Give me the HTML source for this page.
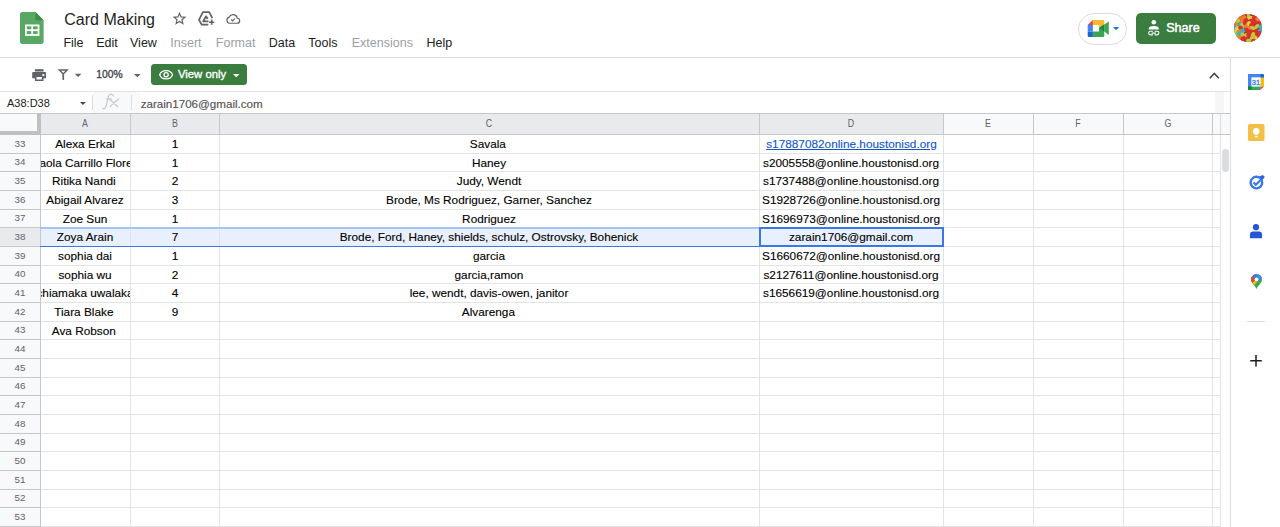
<!DOCTYPE html>
<html><head><meta charset="utf-8"><style>
html,body{margin:0;padding:0;}
body{width:1280px;height:527px;overflow:hidden;position:relative;background:#fff;font-family:"Liberation Sans",sans-serif;}
.t{position:absolute;white-space:nowrap;}
.a{position:absolute;}
.hl{position:absolute;height:1px;}
.vl{position:absolute;width:1px;}
svg{position:absolute;overflow:visible;}
</style></head><body>
<svg style="left:20.2px;top:12.3px" width="24" height="32" viewBox="0 0 24 32">
<path d="M2.5 0H15.5L23.6 8.2V29.5A2.5 2.5 0 0 1 21.1 32H2.5A2.5 2.5 0 0 1 0 29.5V2.5A2.5 2.5 0 0 1 2.5 0Z" fill="#56a862"/>
<path d="M15.5 0V8.2H23.6Z" fill="#3e8a4b"/>
<rect x="5" y="12.5" width="14.4" height="11.4" fill="#fff"/>
<rect x="6.8" y="14.3" width="4.5" height="3" fill="#56a862"/>
<rect x="13.1" y="14.3" width="4.5" height="3" fill="#56a862"/>
<rect x="6.8" y="19.1" width="4.5" height="3" fill="#56a862"/>
<rect x="13.1" y="19.1" width="4.5" height="3" fill="#56a862"/>
</svg>
<div class="t" style="left:64.3px;top:11.86px;font-size:16px;line-height:16px;color:#1f1f1f;font-weight:normal;">Card Making</div>
<svg style="left:173px;top:12px" width="13" height="13" viewBox="0 0 24 24"><path d="M12 2.5l2.8 6.6 7.2.6-5.5 4.7 1.7 7-6.2-3.8-6.2 3.8 1.7-7L2 9.7l7.2-.6z" fill="none" stroke="#5f6368" stroke-width="2.2" stroke-linejoin="miter"/></svg>
<svg style="left:198px;top:11px" width="18" height="16" viewBox="0 0 18 16"><path d="M10.3 13.7H3.8L1 8.9 4.9 1.1H11.2L14.4 7.1" fill="none" stroke="#5f6368" stroke-width="1.7" stroke-linejoin="round"/><path d="M10.6 10.3H5.2L8.1 5.3 9.7 8" fill="none" stroke="#5f6368" stroke-width="1.7" stroke-linejoin="round"/><path d="M13.7 8.6V13.8M11.1 11.2H16.3" stroke="#5f6368" stroke-width="1.6"/></svg>
<svg style="left:226px;top:14px" width="14" height="10" viewBox="0 0 28 20"><path d="M7 18.5h15a5 5 0 0 0 .6-10A8.5 8.5 0 0 0 6.5 6.2 6.3 6.3 0 0 0 7 18.5z" fill="none" stroke="#5f6368" stroke-width="2.4"/><path d="M10.5 11l2.8 2.8 4.5-4.5" fill="none" stroke="#5f6368" stroke-width="2.4"/></svg>
<div class="t" style="left:63.4px;top:37.22px;font-size:12.5px;line-height:12.5px;color:#202124;font-weight:normal;">File</div>
<div class="t" style="left:96.25px;top:37.22px;font-size:12.5px;line-height:12.5px;color:#202124;font-weight:normal;">Edit</div>
<div class="t" style="left:130px;top:37.22px;font-size:12.5px;line-height:12.5px;color:#202124;font-weight:normal;">View</div>
<div class="t" style="left:170.3px;top:37.22px;font-size:12.5px;line-height:12.5px;color:#9aa0a6;font-weight:normal;">Insert</div>
<div class="t" style="left:215.8px;top:37.22px;font-size:12.5px;line-height:12.5px;color:#9aa0a6;font-weight:normal;">Format</div>
<div class="t" style="left:268.75px;top:37.22px;font-size:12.5px;line-height:12.5px;color:#202124;font-weight:normal;">Data</div>
<div class="t" style="left:308.25px;top:37.22px;font-size:12.5px;line-height:12.5px;color:#202124;font-weight:normal;">Tools</div>
<div class="t" style="left:351.75px;top:37.22px;font-size:12.5px;line-height:12.5px;color:#9aa0a6;font-weight:normal;">Extensions</div>
<div class="t" style="left:426.5px;top:37.22px;font-size:12.5px;line-height:12.5px;color:#202124;font-weight:normal;">Help</div>
<div class="a" style="left:1077.5px;top:12.5px;width:47px;height:30.5px;border:1px solid #dadce0;border-radius:16px;box-sizing:content-box"></div>
<svg style="left:1084px;top:16px" width="28" height="24" viewBox="0 0 28 24">
<path d="M3.7 8.9L8.9 3.9V8.9Z" fill="#ea4335"/>
<path d="M8.9 3.9H19A1.3 1.3 0 0 1 20.3 5.2V8.3L15 12.1V8.9H8.9Z" fill="#f5ba2f"/>
<path d="M3.7 8.9H8.9V15.5H3.7Z" fill="#4285f4"/>
<path d="M3.7 15.5H8.9V21H5A1.3 1.3 0 0 1 3.7 19.7Z" fill="#1f63d0"/>
<path d="M8.9 15.5H15V12.1L20.3 8.3V19.7A1.3 1.3 0 0 1 19 21H8.9Z" fill="#3aa655"/>
<path d="M15 12.1L20.3 8.3V15.5Z" fill="#268040"/>
<path d="M20.3 8.6L24.8 5.4V19.1L20.3 15.5Z" fill="#3aa655"/>
</svg>
<svg style="left:1113px;top:26.75px" width="6.2" height="3.3" viewBox="0 0 10 5"><path d="M0 0h10L5 5z" fill="#1a73e8"/></svg>
<div class="a" style="left:1136.2px;top:12.5px;width:79.7px;height:31.6px;background:#3a7d3f;border-radius:5px"></div>
<svg style="left:1148px;top:20.3px" width="12" height="16" viewBox="0 0 12 16">
<circle cx="5.8" cy="2.3" r="2.3" fill="#fff"/>
<path d="M0.8 9.6V8.4C0.8 6.7 3.5 5.95 5.8 5.95S10.8 6.7 10.8 8.4V9.6Z" fill="#fff"/>
<path d="M4.9 11.3H2.5A1.8 1.8 0 0 0 2.5 14.9H4.9M6.7 11.3H9.1A1.8 1.8 0 0 1 9.1 14.9H6.7M3.6 13.1H8" fill="none" stroke="#fff" stroke-width="1.1"/>
</svg>
<div class="t" style="left:1166.2px;top:21.53px;font-size:12.6px;line-height:12.6px;color:#fff;font-weight:normal;-webkit-text-stroke:0.45px #fff;">Share</div>
<svg style="left:1234.1px;top:14.1px" width="28" height="28" viewBox="0 0 28 28">
<defs><clipPath id="av"><circle cx="14" cy="14" r="14"/></clipPath></defs>
<g clip-path="url(#av)"><rect width="28" height="28" fill="#a8322a"/>
<ellipse cx="14.3" cy="2.4" rx="2.9" ry="2.1" transform="rotate(60 14.3 2.4)" fill="#bdca3d"/>
<ellipse cx="16.7" cy="4.4" rx="2.9" ry="2.1" transform="rotate(151 16.7 4.4)" fill="#e9cf45"/>
<ellipse cx="20.5" cy="3.4" rx="2.9" ry="2.1" transform="rotate(139 20.5 3.4)" fill="#d9302b"/>
<ellipse cx="23.9" cy="5.8" rx="2.9" ry="2.1" transform="rotate(33 23.9 5.8)" fill="#ef7a2c"/>
<ellipse cx="11" cy="1.5" rx="2.9" ry="2.1" transform="rotate(94 11 1.5)" fill="#d9302b"/>
<ellipse cx="5.5" cy="4.1" rx="2.9" ry="2.1" transform="rotate(154 5.5 4.1)" fill="#ef7a2c"/>
<ellipse cx="9.6" cy="3.8" rx="2.9" ry="2.1" transform="rotate(121 9.6 3.8)" fill="#ef7a2c"/>
<ellipse cx="3.4" cy="7.2" rx="2.9" ry="2.1" transform="rotate(160 3.4 7.2)" fill="#bdca3d"/>
<ellipse cx="8.5" cy="7.2" rx="2.9" ry="2.1" transform="rotate(148 8.5 7.2)" fill="#ef7a2c"/>
<ellipse cx="12.3" cy="6.8" rx="2.9" ry="2.1" transform="rotate(16 12.3 6.8)" fill="#d9302b"/>
<ellipse cx="16.4" cy="7.2" rx="2.9" ry="2.1" transform="rotate(155 16.4 7.2)" fill="#d9302b"/>
<ellipse cx="20.5" cy="8.2" rx="2.9" ry="2.1" transform="rotate(3 20.5 8.2)" fill="#d9302b"/>
<ellipse cx="24.6" cy="9.6" rx="2.9" ry="2.1" transform="rotate(120 24.6 9.6)" fill="#d9302b"/>
<ellipse cx="2.4" cy="10.9" rx="2.9" ry="2.1" transform="rotate(66 2.4 10.9)" fill="#ef7a2c"/>
<ellipse cx="6.1" cy="10.6" rx="2.9" ry="2.1" transform="rotate(141 6.1 10.6)" fill="#3db0c6"/>
<ellipse cx="8.5" cy="11.6" rx="2.9" ry="2.1" transform="rotate(59 8.5 11.6)" fill="#bdca3d"/>
<ellipse cx="11.3" cy="9.6" rx="2.9" ry="2.1" transform="rotate(49 11.3 9.6)" fill="#d9302b"/>
<ellipse cx="14.7" cy="9.9" rx="2.9" ry="2.1" transform="rotate(120 14.7 9.9)" fill="#e9cf45"/>
<ellipse cx="17.8" cy="10.6" rx="2.9" ry="2.1" transform="rotate(138 17.8 10.6)" fill="#d9302b"/>
<ellipse cx="22.9" cy="12.6" rx="2.9" ry="2.1" transform="rotate(140 22.9 12.6)" fill="#bdca3d"/>
<ellipse cx="26.6" cy="13.0" rx="2.9" ry="2.1" transform="rotate(121 26.6 13.0)" fill="#3db0c6"/>
<ellipse cx="0.7" cy="14.3" rx="2.9" ry="2.1" transform="rotate(101 0.7 14.3)" fill="#3db0c6"/>
<ellipse cx="3.8" cy="14.3" rx="2.9" ry="2.1" transform="rotate(163 3.8 14.3)" fill="#e9cf45"/>
<ellipse cx="6.8" cy="14" rx="2.9" ry="2.1" transform="rotate(38 6.8 14)" fill="#d9302b"/>
<ellipse cx="12.3" cy="13" rx="2.9" ry="2.1" transform="rotate(59 12.3 13)" fill="#ef7a2c"/>
<ellipse cx="15.4" cy="14.3" rx="2.9" ry="2.1" transform="rotate(162 15.4 14.3)" fill="#ef7a2c"/>
<ellipse cx="18.8" cy="14.3" rx="2.9" ry="2.1" transform="rotate(38 18.8 14.3)" fill="#bdca3d"/>
<ellipse cx="23.9" cy="16.4" rx="2.9" ry="2.1" transform="rotate(133 23.9 16.4)" fill="#d9302b"/>
<ellipse cx="26" cy="17.1" rx="2.9" ry="2.1" transform="rotate(99 26 17.1)" fill="#3db0c6"/>
<ellipse cx="1.4" cy="17.8" rx="2.9" ry="2.1" transform="rotate(3 1.4 17.8)" fill="#e9cf45"/>
<ellipse cx="5.5" cy="17.8" rx="2.9" ry="2.1" transform="rotate(171 5.5 17.8)" fill="#ef7a2c"/>
<ellipse cx="9.2" cy="16.4" rx="2.9" ry="2.1" transform="rotate(16 9.2 16.4)" fill="#3db0c6"/>
<ellipse cx="13" cy="16.4" rx="2.9" ry="2.1" transform="rotate(40 13 16.4)" fill="#d9302b"/>
<ellipse cx="16.4" cy="17.8" rx="2.9" ry="2.1" transform="rotate(151 16.4 17.8)" fill="#d9302b"/>
<ellipse cx="21.2" cy="17.8" rx="2.9" ry="2.1" transform="rotate(10 21.2 17.8)" fill="#d9302b"/>
<ellipse cx="3.4" cy="20.1" rx="2.9" ry="2.1" transform="rotate(77 3.4 20.1)" fill="#93c144"/>
<ellipse cx="6.1" cy="19.8" rx="2.9" ry="2.1" transform="rotate(7 6.1 19.8)" fill="#3db0c6"/>
<ellipse cx="8.9" cy="21.2" rx="2.9" ry="2.1" transform="rotate(68 8.9 21.2)" fill="#bdca3d"/>
<ellipse cx="12" cy="21.9" rx="2.9" ry="2.1" transform="rotate(121 12 21.9)" fill="#bdca3d"/>
<ellipse cx="15" cy="20.5" rx="2.9" ry="2.1" transform="rotate(152 15 20.5)" fill="#d9302b"/>
<ellipse cx="19.1" cy="20.8" rx="2.9" ry="2.1" transform="rotate(99 19.1 20.8)" fill="#bdca3d"/>
<ellipse cx="25.3" cy="19.8" rx="2.9" ry="2.1" transform="rotate(109 25.3 19.8)" fill="#d9302b"/>
<ellipse cx="5.5" cy="23.9" rx="2.9" ry="2.1" transform="rotate(101 5.5 23.9)" fill="#ef7a2c"/>
<ellipse cx="9.2" cy="24.6" rx="2.9" ry="2.1" transform="rotate(147 9.2 24.6)" fill="#d9302b"/>
<ellipse cx="12.6" cy="25.3" rx="2.9" ry="2.1" transform="rotate(113 12.6 25.3)" fill="#d9302b"/>
<ellipse cx="18.4" cy="24.6" rx="2.9" ry="2.1" transform="rotate(34 18.4 24.6)" fill="#bdca3d"/>
<ellipse cx="22.5" cy="23.9" rx="2.9" ry="2.1" transform="rotate(93 22.5 23.9)" fill="#e9cf45"/>
<ellipse cx="15" cy="27" rx="2.9" ry="2.1" transform="rotate(24 15 27)" fill="#bdca3d"/>
<ellipse cx="20" cy="27" rx="2.9" ry="2.1" transform="rotate(9 20 27)" fill="#d9302b"/>
<ellipse cx="25" cy="22" rx="2.9" ry="2.1" transform="rotate(34 25 22)" fill="#d9302b"/>
</g></svg>
<div class="hl" style="left:0;top:57px;width:1280px;background:#dadce0"></div>
<svg style="left:26px;top:62px" width="60" height="26" viewBox="0 0 60 26">
<rect x="8.9" y="7.2" width="8.6" height="1.9" fill="#5f6368"/>
<rect x="8.9" y="9.1" width="8.6" height="1.1" fill="#a7abb0"/>
<path d="M7 10.1H19.2A0.8 0.8 0 0 1 20 10.9V16.3H17.5V19H8.9V16.3H6.2V10.9A0.8 0.8 0 0 1 7 10.1Z" fill="#5f6368"/>
<rect x="10.5" y="15" width="5.3" height="2.5" fill="#fff"/>
<rect x="16.4" y="12.1" width="1.9" height="1.9" fill="#fff"/>
<path d="M33.4 7.9H41.1L37.25 11.9Z" fill="none" stroke="#5f6368" stroke-width="1.5" stroke-linejoin="miter"/>
<rect x="36.4" y="12.2" width="1.7" height="5.7" fill="#5f6368"/>
<path d="M48.8 11.8H55.5L52.15 15.1Z" fill="#5f6368"/>
</svg>
<div class="t" style="left:96.3px;top:69.88px;font-size:10.3px;line-height:10.3px;color:#3c4043;font-weight:normal;-webkit-text-stroke:0.3px #3c4043;">100%</div>
<svg style="left:133.5px;top:73.9px" width="6.7" height="3.4" viewBox="0 0 10 5"><path d="M0 0h10L5 5z" fill="#5f6368"/></svg>
<div class="a" style="left:151px;top:64px;width:96px;height:21.2px;background:#3a7d3f;border-radius:3.5px"></div>
<svg style="left:159.2px;top:70px" width="14.2" height="9.6" viewBox="0 0 22 15"><path d="M11 1C6 1 2.2 4 1 7.5 2.2 11 6 14 11 14s8.8-3 10-6.5C19.8 4 16 1 11 1z" fill="none" stroke="#fff" stroke-width="2"/><circle cx="11" cy="7.5" r="3.3" fill="none" stroke="#fff" stroke-width="2"/></svg>
<div class="t" style="left:178px;top:69.23px;font-size:11.3px;line-height:11.3px;color:#fff;font-weight:normal;-webkit-text-stroke:0.35px #fff;">View only</div>
<svg style="left:233px;top:74px" width="6.5" height="3.3" viewBox="0 0 10 5"><path d="M0 0h10L5 5z" fill="#fff"/></svg>
<svg style="left:1209px;top:71.5px" width="10.6" height="7" viewBox="0 0 10.6 7"><path d="M0.8 6.3L5.3 1.5 9.8 6.3" fill="none" stroke="#444746" stroke-width="1.6"/></svg>
<div class="hl" style="left:0;top:91px;width:1230px;background:#e1e3e1"></div>
<div class="t" style="left:7px;top:97.69px;font-size:11px;line-height:11px;color:#202124;font-weight:normal;">A38:D38</div>
<svg style="left:80px;top:102px" width="5.8" height="3" viewBox="0 0 10 5"><path d="M0 0h10L5 5z" fill="#444746"/></svg>
<div class="vl" style="left:92px;top:94.5px;height:15.5px;background:#dadce0"></div>
<div class="a" style="left:92.5px;top:92px;width:47.5px;height:21px;background:#f8f9fa"></div>
<svg style="left:98px;top:92px" width="26" height="20" viewBox="0 0 26 20"><path d="M4.8 16.4Q7.3 17.8 8.4 13L10.3 4.8Q11.2 1.9 13.3 2.2Q14.9 2.5 15.4 3.9M8.7 7H13.3M12.4 8.3L19.6 14.6M12 14.6Q15.5 11.2 20.6 7.1" fill="none" stroke="#c9cacb" stroke-width="1.3" stroke-linecap="round"/></svg>
<div class="vl" style="left:131px;top:94.5px;height:15.5px;background:#dadce0"></div>
<div class="t" style="left:140.7px;top:97.98px;font-size:11.6px;line-height:11.6px;color:#525252;font-weight:normal;-webkit-text-stroke:0.15px #525252;">zarain1706@gmail.com</div>
<div class="a" style="left:1215px;top:92px;width:8.7px;height:21px;background:#f6f6f6"></div>
<div class="a" style="left:0;top:113px;width:1230px;height:21px;background:#f8f9fa"></div>
<div class="a" style="left:40px;top:113px;width:903px;height:21px;background:#e8eaed"></div>
<div class="a" style="left:0;top:134px;width:40px;height:393px;background:#f8f9fa"></div>
<div class="a" style="left:0;top:228.40px;width:40px;height:17.66px;background:#e8eaed"></div>
<div class="a" style="left:41px;top:227.40px;width:902px;height:18.66px;background:#e8f0fd"></div>
<div class="hl" style="left:40px;top:152.76px;width:1180px;background:#e2e3e3"></div>
<div class="hl" style="left:0;top:152.76px;width:40px;background:#c7c7c7"></div>
<div class="hl" style="left:40px;top:171.42px;width:1180px;background:#e2e3e3"></div>
<div class="hl" style="left:0;top:171.42px;width:40px;background:#c7c7c7"></div>
<div class="hl" style="left:40px;top:190.08px;width:1180px;background:#e2e3e3"></div>
<div class="hl" style="left:0;top:190.08px;width:40px;background:#c7c7c7"></div>
<div class="hl" style="left:40px;top:208.74px;width:1180px;background:#e2e3e3"></div>
<div class="hl" style="left:0;top:208.74px;width:40px;background:#c7c7c7"></div>
<div class="hl" style="left:40px;top:227.40px;width:1180px;background:#e2e3e3"></div>
<div class="hl" style="left:0;top:227.40px;width:40px;background:#c7c7c7"></div>
<div class="hl" style="left:40px;top:246.06px;width:1180px;background:#e2e3e3"></div>
<div class="hl" style="left:0;top:246.06px;width:40px;background:#c7c7c7"></div>
<div class="hl" style="left:40px;top:264.72px;width:1180px;background:#e2e3e3"></div>
<div class="hl" style="left:0;top:264.72px;width:40px;background:#c7c7c7"></div>
<div class="hl" style="left:40px;top:283.38px;width:1180px;background:#e2e3e3"></div>
<div class="hl" style="left:0;top:283.38px;width:40px;background:#c7c7c7"></div>
<div class="hl" style="left:40px;top:302.04px;width:1180px;background:#e2e3e3"></div>
<div class="hl" style="left:0;top:302.04px;width:40px;background:#c7c7c7"></div>
<div class="hl" style="left:40px;top:320.70px;width:1180px;background:#e2e3e3"></div>
<div class="hl" style="left:0;top:320.70px;width:40px;background:#c7c7c7"></div>
<div class="hl" style="left:40px;top:339.36px;width:1180px;background:#e2e3e3"></div>
<div class="hl" style="left:0;top:339.36px;width:40px;background:#c7c7c7"></div>
<div class="hl" style="left:40px;top:358.02px;width:1180px;background:#e2e3e3"></div>
<div class="hl" style="left:0;top:358.02px;width:40px;background:#c7c7c7"></div>
<div class="hl" style="left:40px;top:376.68px;width:1180px;background:#e2e3e3"></div>
<div class="hl" style="left:0;top:376.68px;width:40px;background:#c7c7c7"></div>
<div class="hl" style="left:40px;top:395.34px;width:1180px;background:#e2e3e3"></div>
<div class="hl" style="left:0;top:395.34px;width:40px;background:#c7c7c7"></div>
<div class="hl" style="left:40px;top:414.00px;width:1180px;background:#e2e3e3"></div>
<div class="hl" style="left:0;top:414.00px;width:40px;background:#c7c7c7"></div>
<div class="hl" style="left:40px;top:432.66px;width:1180px;background:#e2e3e3"></div>
<div class="hl" style="left:0;top:432.66px;width:40px;background:#c7c7c7"></div>
<div class="hl" style="left:40px;top:451.32px;width:1180px;background:#e2e3e3"></div>
<div class="hl" style="left:0;top:451.32px;width:40px;background:#c7c7c7"></div>
<div class="hl" style="left:40px;top:469.98px;width:1180px;background:#e2e3e3"></div>
<div class="hl" style="left:0;top:469.98px;width:40px;background:#c7c7c7"></div>
<div class="hl" style="left:40px;top:488.64px;width:1180px;background:#e2e3e3"></div>
<div class="hl" style="left:0;top:488.64px;width:40px;background:#c7c7c7"></div>
<div class="hl" style="left:40px;top:507.30px;width:1180px;background:#e2e3e3"></div>
<div class="hl" style="left:0;top:507.30px;width:40px;background:#c7c7c7"></div>
<div class="hl" style="left:40px;top:525.96px;width:1180px;background:#e2e3e3"></div>
<div class="hl" style="left:0;top:525.96px;width:40px;background:#c7c7c7"></div>
<div class="vl" style="left:130px;top:134px;height:393px;background:#e2e3e3"></div>
<div class="vl" style="left:130px;top:113px;height:21px;background:#c7c7c7"></div>
<div class="vl" style="left:219px;top:134px;height:393px;background:#e2e3e3"></div>
<div class="vl" style="left:219px;top:113px;height:21px;background:#c7c7c7"></div>
<div class="vl" style="left:759px;top:134px;height:393px;background:#e2e3e3"></div>
<div class="vl" style="left:759px;top:113px;height:21px;background:#c7c7c7"></div>
<div class="vl" style="left:943px;top:134px;height:393px;background:#e2e3e3"></div>
<div class="vl" style="left:943px;top:113px;height:21px;background:#c7c7c7"></div>
<div class="vl" style="left:1033px;top:134px;height:393px;background:#e2e3e3"></div>
<div class="vl" style="left:1033px;top:113px;height:21px;background:#c7c7c7"></div>
<div class="vl" style="left:1123px;top:134px;height:393px;background:#e2e3e3"></div>
<div class="vl" style="left:1123px;top:113px;height:21px;background:#c7c7c7"></div>
<div class="vl" style="left:1212px;top:134px;height:393px;background:#e2e3e3"></div>
<div class="vl" style="left:1212px;top:113px;height:21px;background:#c7c7c7"></div>
<div class="vl" style="left:1220px;top:134px;height:393px;background:#e2e3e3"></div>
<div class="vl" style="left:1220px;top:113px;height:21px;background:#dcdcdc"></div>
<div class="hl" style="left:0;top:113px;width:1230px;background:#c7c7c7"></div>
<div class="hl" style="left:0;top:134px;width:1230px;background:#c7c7c7"></div>
<div class="vl" style="left:40px;top:134px;height:393px;background:#c7c7c7"></div>
<div class="a" style="left:37px;top:113px;width:4px;height:22px;background:#c0c0c0"></div>
<div class="a" style="left:0;top:131px;width:41px;height:4px;background:#c0c0c0"></div>
<div class="t" style="left:55.00px;width:60px;text-align:center;top:118.01px;font-size:10.5px;line-height:10.5px;color:#5f6368;transform:scaleX(0.84);">A</div>
<div class="t" style="left:144.50px;width:60px;text-align:center;top:118.01px;font-size:10.5px;line-height:10.5px;color:#5f6368;transform:scaleX(0.84);">B</div>
<div class="t" style="left:459.00px;width:60px;text-align:center;top:118.01px;font-size:10.5px;line-height:10.5px;color:#5f6368;transform:scaleX(0.84);">C</div>
<div class="t" style="left:821.00px;width:60px;text-align:center;top:118.01px;font-size:10.5px;line-height:10.5px;color:#5f6368;transform:scaleX(0.84);">D</div>
<div class="t" style="left:958.00px;width:60px;text-align:center;top:118.01px;font-size:10.5px;line-height:10.5px;color:#5f6368;transform:scaleX(0.84);">E</div>
<div class="t" style="left:1048.00px;width:60px;text-align:center;top:118.01px;font-size:10.5px;line-height:10.5px;color:#5f6368;transform:scaleX(0.84);">F</div>
<div class="t" style="left:1137.50px;width:60px;text-align:center;top:118.01px;font-size:10.5px;line-height:10.5px;color:#5f6368;transform:scaleX(0.84);">G</div>
<div class="t" style="left:0.00px;width:40px;text-align:center;top:138.66px;font-size:9.8px;line-height:9.8px;color:#5f6368;">33</div>
<div class="t" style="left:0.00px;width:40px;text-align:center;top:157.32px;font-size:9.8px;line-height:9.8px;color:#5f6368;">34</div>
<div class="t" style="left:0.00px;width:40px;text-align:center;top:175.98px;font-size:9.8px;line-height:9.8px;color:#5f6368;">35</div>
<div class="t" style="left:0.00px;width:40px;text-align:center;top:194.64px;font-size:9.8px;line-height:9.8px;color:#5f6368;">36</div>
<div class="t" style="left:0.00px;width:40px;text-align:center;top:213.30px;font-size:9.8px;line-height:9.8px;color:#5f6368;">37</div>
<div class="t" style="left:0.00px;width:40px;text-align:center;top:231.96px;font-size:9.8px;line-height:9.8px;color:#5f6368;">38</div>
<div class="t" style="left:0.00px;width:40px;text-align:center;top:250.62px;font-size:9.8px;line-height:9.8px;color:#5f6368;">39</div>
<div class="t" style="left:0.00px;width:40px;text-align:center;top:269.28px;font-size:9.8px;line-height:9.8px;color:#5f6368;">40</div>
<div class="t" style="left:0.00px;width:40px;text-align:center;top:287.94px;font-size:9.8px;line-height:9.8px;color:#5f6368;">41</div>
<div class="t" style="left:0.00px;width:40px;text-align:center;top:306.60px;font-size:9.8px;line-height:9.8px;color:#5f6368;">42</div>
<div class="t" style="left:0.00px;width:40px;text-align:center;top:325.26px;font-size:9.8px;line-height:9.8px;color:#5f6368;">43</div>
<div class="t" style="left:0.00px;width:40px;text-align:center;top:343.92px;font-size:9.8px;line-height:9.8px;color:#5f6368;">44</div>
<div class="t" style="left:0.00px;width:40px;text-align:center;top:362.58px;font-size:9.8px;line-height:9.8px;color:#5f6368;">45</div>
<div class="t" style="left:0.00px;width:40px;text-align:center;top:381.24px;font-size:9.8px;line-height:9.8px;color:#5f6368;">46</div>
<div class="t" style="left:0.00px;width:40px;text-align:center;top:399.90px;font-size:9.8px;line-height:9.8px;color:#5f6368;">47</div>
<div class="t" style="left:0.00px;width:40px;text-align:center;top:418.56px;font-size:9.8px;line-height:9.8px;color:#5f6368;">48</div>
<div class="t" style="left:0.00px;width:40px;text-align:center;top:437.22px;font-size:9.8px;line-height:9.8px;color:#5f6368;">49</div>
<div class="t" style="left:0.00px;width:40px;text-align:center;top:455.88px;font-size:9.8px;line-height:9.8px;color:#5f6368;">50</div>
<div class="t" style="left:0.00px;width:40px;text-align:center;top:474.54px;font-size:9.8px;line-height:9.8px;color:#5f6368;">51</div>
<div class="t" style="left:0.00px;width:40px;text-align:center;top:493.20px;font-size:9.8px;line-height:9.8px;color:#5f6368;">52</div>
<div class="t" style="left:0.00px;width:40px;text-align:center;top:511.86px;font-size:9.8px;line-height:9.8px;color:#5f6368;">53</div>
<div class="a" style="left:40px;top:226.90px;width:903px;height:2px;background:#a6c3f4"></div>
<div class="hl" style="left:40px;top:246.06px;width:903px;background:#3b78e7"></div>
<div class="a" style="left:759px;top:227.3px;width:181px;height:15.5px;border:2px solid #3b78e7"></div>
<div class="a" style="left:41.00px;top:135.10px;width:89.00px;height:17.66px;overflow:hidden"><div class="t" style="left:-200px;right:-200px;text-align:center;top:3.87px;font-size:11.8px;line-height:11.8px;color:#000;-webkit-text-stroke:0.12px #000;padding-right:1px;">Alexa Erkal</div></div>
<div class="a" style="left:131.00px;top:135.10px;width:88.00px;height:17.66px;overflow:hidden"><div class="t" style="left:-200px;right:-200px;text-align:center;top:3.87px;font-size:11.8px;line-height:11.8px;color:#000;-webkit-text-stroke:0.12px #000;">1</div></div>
<div class="a" style="left:220.00px;top:135.10px;width:539.00px;height:17.66px;overflow:hidden"><div class="t" style="left:-200px;right:-200px;text-align:center;top:3.87px;font-size:11.8px;line-height:11.8px;color:#000;-webkit-text-stroke:0.12px #000;padding-right:3.3px;">Savala</div></div>
<div class="a" style="left:760.00px;top:135.10px;width:183.00px;height:17.66px;overflow:hidden"><div class="t" style="left:-200px;right:-200px;text-align:center;top:3.87px;font-size:11.8px;line-height:11.8px;color:#1155cc;text-decoration:underline;-webkit-text-stroke:0.12px #1155cc;">s17887082online.houstonisd.org</div></div>
<div class="a" style="left:41.00px;top:153.76px;width:89.00px;height:17.66px;overflow:hidden"><div class="t" style="left:-200px;right:-200px;text-align:center;top:3.87px;font-size:11.8px;line-height:11.8px;color:#000;-webkit-text-stroke:0.12px #000;padding-right:1px;">Paola Carrillo Flores</div></div>
<div class="a" style="left:131.00px;top:153.76px;width:88.00px;height:17.66px;overflow:hidden"><div class="t" style="left:-200px;right:-200px;text-align:center;top:3.87px;font-size:11.8px;line-height:11.8px;color:#000;-webkit-text-stroke:0.12px #000;">1</div></div>
<div class="a" style="left:220.00px;top:153.76px;width:539.00px;height:17.66px;overflow:hidden"><div class="t" style="left:-200px;right:-200px;text-align:center;top:3.87px;font-size:11.8px;line-height:11.8px;color:#000;-webkit-text-stroke:0.12px #000;padding-right:1px;">Haney</div></div>
<div class="a" style="left:760.00px;top:153.76px;width:183.00px;height:17.66px;overflow:hidden"><div class="t" style="left:-200px;right:-200px;text-align:center;top:3.87px;font-size:11.8px;line-height:11.8px;color:#000;-webkit-text-stroke:0.12px #000;padding-right:1px;">s2005558@online.houstonisd.org</div></div>
<div class="a" style="left:41.00px;top:172.42px;width:89.00px;height:17.66px;overflow:hidden"><div class="t" style="left:-200px;right:-200px;text-align:center;top:3.87px;font-size:11.8px;line-height:11.8px;color:#000;-webkit-text-stroke:0.12px #000;padding-right:3.3px;">Ritika Nandi</div></div>
<div class="a" style="left:131.00px;top:172.42px;width:88.00px;height:17.66px;overflow:hidden"><div class="t" style="left:-200px;right:-200px;text-align:center;top:3.87px;font-size:11.8px;line-height:11.8px;color:#000;-webkit-text-stroke:0.12px #000;">2</div></div>
<div class="a" style="left:220.00px;top:172.42px;width:539.00px;height:17.66px;overflow:hidden"><div class="t" style="left:-200px;right:-200px;text-align:center;top:3.87px;font-size:11.8px;line-height:11.8px;color:#000;-webkit-text-stroke:0.12px #000;padding-right:1px;">Judy, Wendt</div></div>
<div class="a" style="left:760.00px;top:172.42px;width:183.00px;height:17.66px;overflow:hidden"><div class="t" style="left:-200px;right:-200px;text-align:center;top:3.87px;font-size:11.8px;line-height:11.8px;color:#000;-webkit-text-stroke:0.12px #000;padding-right:1px;">s1737488@online.houstonisd.org</div></div>
<div class="a" style="left:41.00px;top:191.08px;width:89.00px;height:17.66px;overflow:hidden"><div class="t" style="left:-200px;right:-200px;text-align:center;top:3.87px;font-size:11.8px;line-height:11.8px;color:#000;-webkit-text-stroke:0.12px #000;padding-right:1px;">Abigail Alvarez</div></div>
<div class="a" style="left:131.00px;top:191.08px;width:88.00px;height:17.66px;overflow:hidden"><div class="t" style="left:-200px;right:-200px;text-align:center;top:3.87px;font-size:11.8px;line-height:11.8px;color:#000;-webkit-text-stroke:0.12px #000;">3</div></div>
<div class="a" style="left:220.00px;top:191.08px;width:539.00px;height:17.66px;overflow:hidden"><div class="t" style="left:-200px;right:-200px;text-align:center;top:3.87px;font-size:11.8px;line-height:11.8px;color:#000;-webkit-text-stroke:0.12px #000;padding-right:1px;">Brode, Ms Rodriguez, Garner, Sanchez</div></div>
<div class="a" style="left:760.00px;top:191.08px;width:183.00px;height:17.66px;overflow:hidden"><div class="t" style="left:-200px;right:-200px;text-align:center;top:3.87px;font-size:11.8px;line-height:11.8px;color:#000;-webkit-text-stroke:0.12px #000;padding-right:1px;">S1928726@online.houstonisd.org</div></div>
<div class="a" style="left:41.00px;top:209.74px;width:89.00px;height:17.66px;overflow:hidden"><div class="t" style="left:-200px;right:-200px;text-align:center;top:3.87px;font-size:11.8px;line-height:11.8px;color:#000;-webkit-text-stroke:0.12px #000;padding-right:1px;">Zoe Sun</div></div>
<div class="a" style="left:131.00px;top:209.74px;width:88.00px;height:17.66px;overflow:hidden"><div class="t" style="left:-200px;right:-200px;text-align:center;top:3.87px;font-size:11.8px;line-height:11.8px;color:#000;-webkit-text-stroke:0.12px #000;">1</div></div>
<div class="a" style="left:220.00px;top:209.74px;width:539.00px;height:17.66px;overflow:hidden"><div class="t" style="left:-200px;right:-200px;text-align:center;top:3.87px;font-size:11.8px;line-height:11.8px;color:#000;-webkit-text-stroke:0.12px #000;padding-right:1px;">Rodriguez</div></div>
<div class="a" style="left:760.00px;top:209.74px;width:183.00px;height:17.66px;overflow:hidden"><div class="t" style="left:-200px;right:-200px;text-align:center;top:3.87px;font-size:11.8px;line-height:11.8px;color:#000;-webkit-text-stroke:0.12px #000;padding-right:1px;">S1696973@online.houstonisd.org</div></div>
<div class="a" style="left:41.00px;top:228.40px;width:89.00px;height:17.66px;overflow:hidden"><div class="t" style="left:-200px;right:-200px;text-align:center;top:3.87px;font-size:11.8px;line-height:11.8px;color:#000;-webkit-text-stroke:0.12px #000;padding-right:1px;">Zoya Arain</div></div>
<div class="a" style="left:131.00px;top:228.40px;width:88.00px;height:17.66px;overflow:hidden"><div class="t" style="left:-200px;right:-200px;text-align:center;top:3.87px;font-size:11.8px;line-height:11.8px;color:#000;-webkit-text-stroke:0.12px #000;">7</div></div>
<div class="a" style="left:220.00px;top:228.40px;width:539.00px;height:17.66px;overflow:hidden"><div class="t" style="left:-200px;right:-200px;text-align:center;top:3.87px;font-size:11.8px;line-height:11.8px;color:#000;-webkit-text-stroke:0.12px #000;padding-right:1px;">Brode, Ford, Haney, shields, schulz, Ostrovsky, Bohenick</div></div>
<div class="a" style="left:760.00px;top:228.40px;width:183.00px;height:17.66px;overflow:hidden"><div class="t" style="left:-200px;right:-200px;text-align:center;top:3.87px;font-size:11.8px;line-height:11.8px;color:#000;-webkit-text-stroke:0.12px #000;padding-right:1px;">zarain1706@gmail.com</div></div>
<div class="a" style="left:41.00px;top:247.06px;width:89.00px;height:17.66px;overflow:hidden"><div class="t" style="left:-200px;right:-200px;text-align:center;top:3.87px;font-size:11.8px;line-height:11.8px;color:#000;-webkit-text-stroke:0.12px #000;padding-right:1px;">sophia dai</div></div>
<div class="a" style="left:131.00px;top:247.06px;width:88.00px;height:17.66px;overflow:hidden"><div class="t" style="left:-200px;right:-200px;text-align:center;top:3.87px;font-size:11.8px;line-height:11.8px;color:#000;-webkit-text-stroke:0.12px #000;">1</div></div>
<div class="a" style="left:220.00px;top:247.06px;width:539.00px;height:17.66px;overflow:hidden"><div class="t" style="left:-200px;right:-200px;text-align:center;top:3.87px;font-size:11.8px;line-height:11.8px;color:#000;-webkit-text-stroke:0.12px #000;padding-right:1px;">garcia</div></div>
<div class="a" style="left:760.00px;top:247.06px;width:183.00px;height:17.66px;overflow:hidden"><div class="t" style="left:-200px;right:-200px;text-align:center;top:3.87px;font-size:11.8px;line-height:11.8px;color:#000;-webkit-text-stroke:0.12px #000;padding-right:1px;">S1660672@online.houstonisd.org</div></div>
<div class="a" style="left:41.00px;top:265.72px;width:89.00px;height:17.66px;overflow:hidden"><div class="t" style="left:-200px;right:-200px;text-align:center;top:3.87px;font-size:11.8px;line-height:11.8px;color:#000;-webkit-text-stroke:0.12px #000;padding-right:1px;">sophia wu</div></div>
<div class="a" style="left:131.00px;top:265.72px;width:88.00px;height:17.66px;overflow:hidden"><div class="t" style="left:-200px;right:-200px;text-align:center;top:3.87px;font-size:11.8px;line-height:11.8px;color:#000;-webkit-text-stroke:0.12px #000;">2</div></div>
<div class="a" style="left:220.00px;top:265.72px;width:539.00px;height:17.66px;overflow:hidden"><div class="t" style="left:-200px;right:-200px;text-align:center;top:3.87px;font-size:11.8px;line-height:11.8px;color:#000;-webkit-text-stroke:0.12px #000;padding-right:1px;">garcia,ramon</div></div>
<div class="a" style="left:760.00px;top:265.72px;width:183.00px;height:17.66px;overflow:hidden"><div class="t" style="left:-200px;right:-200px;text-align:center;top:3.87px;font-size:11.8px;line-height:11.8px;color:#000;-webkit-text-stroke:0.12px #000;padding-right:1px;">s2127611@online.houstonisd.org</div></div>
<div class="a" style="left:41.00px;top:284.38px;width:89.00px;height:17.66px;overflow:hidden"><div class="t" style="left:-200px;right:-200px;text-align:center;top:3.87px;font-size:11.8px;line-height:11.8px;color:#000;-webkit-text-stroke:0.12px #000;padding-right:1px;">chiamaka uwalaka</div></div>
<div class="a" style="left:131.00px;top:284.38px;width:88.00px;height:17.66px;overflow:hidden"><div class="t" style="left:-200px;right:-200px;text-align:center;top:3.87px;font-size:11.8px;line-height:11.8px;color:#000;-webkit-text-stroke:0.12px #000;">4</div></div>
<div class="a" style="left:220.00px;top:284.38px;width:539.00px;height:17.66px;overflow:hidden"><div class="t" style="left:-200px;right:-200px;text-align:center;top:3.87px;font-size:11.8px;line-height:11.8px;color:#000;-webkit-text-stroke:0.12px #000;padding-right:1px;">lee, wendt, davis-owen, janitor</div></div>
<div class="a" style="left:760.00px;top:284.38px;width:183.00px;height:17.66px;overflow:hidden"><div class="t" style="left:-200px;right:-200px;text-align:center;top:3.87px;font-size:11.8px;line-height:11.8px;color:#000;-webkit-text-stroke:0.12px #000;padding-right:1px;">s1656619@online.houstonisd.org</div></div>
<div class="a" style="left:41.00px;top:303.04px;width:89.00px;height:17.66px;overflow:hidden"><div class="t" style="left:-200px;right:-200px;text-align:center;top:3.87px;font-size:11.8px;line-height:11.8px;color:#000;-webkit-text-stroke:0.12px #000;padding-right:3.3px;">Tiara Blake</div></div>
<div class="a" style="left:131.00px;top:303.04px;width:88.00px;height:17.66px;overflow:hidden"><div class="t" style="left:-200px;right:-200px;text-align:center;top:3.87px;font-size:11.8px;line-height:11.8px;color:#000;-webkit-text-stroke:0.12px #000;">9</div></div>
<div class="a" style="left:220.00px;top:303.04px;width:539.00px;height:17.66px;overflow:hidden"><div class="t" style="left:-200px;right:-200px;text-align:center;top:3.87px;font-size:11.8px;line-height:11.8px;color:#000;-webkit-text-stroke:0.12px #000;padding-right:2.2px;">Alvarenga</div></div>
<div class="a" style="left:41.00px;top:321.70px;width:89.00px;height:17.66px;overflow:hidden"><div class="t" style="left:-200px;right:-200px;text-align:center;top:3.87px;font-size:11.8px;line-height:11.8px;color:#000;-webkit-text-stroke:0.12px #000;padding-right:3.3px;">Ava Robson</div></div>
<div class="a" style="left:1221.5px;top:148.5px;width:7.5px;height:23px;background:#dadce0;border-radius:4px"></div>
<div class="vl" style="left:1230px;top:57px;height:470px;background:#dadce0"></div>
<svg style="left:1247.7px;top:74.4px" width="16" height="16" viewBox="0 0 16 16">
<path d="M1.5 0H14.5A1.5 1.5 0 0 1 16 1.5V3.6H0V1.5A1.5 1.5 0 0 1 1.5 0Z" fill="#4285f4"/>
<rect x="0" y="0" width="3.6" height="16" fill="#4285f4"/>
<rect x="0" y="12.4" width="12.4" height="3.6" fill="#34a853"/>
<path d="M0 12.4H3.6V16H1.5A1.5 1.5 0 0 1 0 14.5Z" fill="#188038"/>
<rect x="12.4" y="3.6" width="3.6" height="8.8" fill="#fbbc04"/>
<path d="M12.4 0H14.5A1.5 1.5 0 0 1 16 1.5V3.6H12.4Z" fill="#1967d2"/>
<path d="M12.4 12.4H16L12.4 16Z" fill="#ea4335"/>
<rect x="3.6" y="3.6" width="8.8" height="8.8" fill="#fff"/>
<text x="8" y="11" font-size="7.6" font-family="Liberation Sans" fill="#4285f4" stroke="#4285f4" stroke-width="0.35" text-anchor="middle">31</text>
</svg>
<svg style="left:1248px;top:124px" width="16.5" height="17" viewBox="0 0 16.5 17">
<rect width="16.5" height="17" rx="1.5" fill="#f3bf45"/>
<circle cx="8.25" cy="7.3" r="3.3" fill="#fff"/>
<rect x="6.8" y="9" width="2.9" height="2.2" fill="#fff"/>
<rect x="6.6" y="12.2" width="3.3" height="1.1" fill="#fff"/>
</svg>
<svg style="left:1248.5px;top:175px" width="16" height="15" viewBox="0 0 16 15">
<circle cx="7.4" cy="7.6" r="5.8" fill="none" stroke="#3b78e7" stroke-width="2.4"/>
<path d="M4.5 7.5L6.8 9.8 11.4 5.2" fill="none" stroke="#3b78e7" stroke-width="2.2"/>
<path d="M10.3 1.5L13.8 0 15.8 2 13.6 5Z" fill="#2a65d6"/>
</svg>
<svg style="left:1250px;top:224.3px" width="12" height="14.3" viewBox="0 0 12 14.3">
<circle cx="6" cy="3.2" r="3.1" fill="#2457d2"/>
<path d="M3 7.4H9A3 3 0 0 1 12 10.4V14.3H0V10.4A3 3 0 0 1 3 7.4Z" fill="#2457d2"/>
</svg>
<svg style="left:1250.6px;top:274px" width="11" height="15" viewBox="0 0 11 15">
<path d="M5.5 0A5.5 5.5 0 0 1 11 5.5C11 9 7.5 10.5 5.5 15 3.5 10.5 0 9 0 5.5A5.5 5.5 0 0 1 5.5 0Z" fill="#34a853"/>
<path d="M5.5 0A5.5 5.5 0 0 1 11 5.5L7.5 5.5A2 2 0 0 0 5.5 3.5Z" fill="#4285f4"/>
<path d="M5.5 0A5.5 5.5 0 0 0 1.2 2.2L3.8 4.3A2 2 0 0 1 5.5 3.5Z" fill="#3b78e7"/>
<path d="M1.2 2.2A5.5 5.5 0 0 0 0 5.5C0 6.8 0.5 7.9 1.2 8.9L3.8 6.7A2 2 0 0 1 3.8 4.3Z" fill="#ea4335"/>
<path d="M1.2 8.9C1.8 9.8 2.5 10.6 3 11.3L7.3 6.5A2 2 0 0 1 3.8 6.7Z" fill="#fbbc04"/>
<circle cx="5.5" cy="5.5" r="1.9" fill="#fff"/>
</svg>
<div class="hl" style="left:1246.5px;top:321px;width:18px;background:#dadce0"></div>
<svg style="left:1250px;top:355.3px" width="12" height="11.5" viewBox="0 0 12 11.5"><path d="M6 0V11.5M0.2 5.75H11.8" stroke="#1f1f1f" stroke-width="1.5"/></svg>
</body></html>
